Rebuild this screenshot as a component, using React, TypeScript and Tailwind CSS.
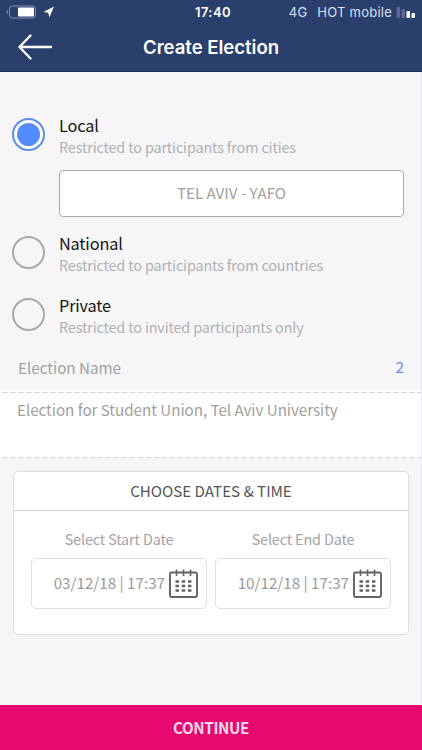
import React from 'react';

type OptionProps = { title: string; hint: string; selected?: boolean };

function Option({ title, hint, selected = false }: OptionProps) {
  return (
    <div className="flex h-11 items-start pl-3">
      <span
        className={
          selected
            ? 'mt-[4px] flex size-[33px] shrink-0 items-center justify-center rounded-full border-2 border-[#5b8def] bg-white'
            : 'mt-[4px] size-[33px] shrink-0 rounded-full border-2 border-[#a9a9a9]'
        }
      >
        {selected && <span className="size-[23px] rounded-full bg-[#548bff]" />}
      </span>
      <div className="ml-[14px] whitespace-nowrap">
        <div className="text-[16.3px] leading-[22px] tracking-[-0.16px] text-[#151515]">{title}</div>
        <div className="text-[14.4px] leading-[22px] tracking-[-0.15px] text-[#b0b0b1]">{hint}</div>
      </div>
    </div>
  );
}

function DashedLine() {
  return (
    <svg className="block h-px w-full" viewBox="0 0 422 1" preserveAspectRatio="none">
      <path d="M2 .5H422" stroke="#d2d2d2" strokeDasharray="5.7 2.3" />
    </svg>
  );
}

function CalendarIcon() {
  return (
    <svg className="h-[29px] w-[29px] shrink-0" viewBox="0 0 29 29" fill="none" stroke="#636366">
      <rect x="1" y="3.5" width="27" height="24.5" rx="1.5" strokeWidth="1.9" />
      <path d="M7.5 0.5V7M14.5 0.5V7M21.5 0.5V7" strokeWidth="1.6" />
      <path
        d="M6.5 12.5H10M12.7 12.5H16.2M18.9 12.5H22.4M6.5 17H10M12.7 17H16.2M18.9 17H22.4M6.5 21.5H10M12.7 21.5H16.2M18.9 21.5H22.4"
        strokeWidth="2.5"
      />
    </svg>
  );
}

function DateField({ label, value }: { label: string; value: string }) {
  return (
    <div className="w-[176px]">
      <div className="text-center text-[14.4px] leading-[22px] tracking-[-0.14px] text-[#a3a3a4]">{label}</div>
      <div className="mt-2 flex h-[51px] items-center justify-end rounded-[5px] border border-[#dededf] pr-[8px]">
        <span className="mr-[4px] whitespace-nowrap pb-[3px] text-[15.2px] leading-[22px] text-[#9b9b9b]">{value}</span>
        <CalendarIcon />
      </div>
    </div>
  );
}

export default function App() {
  return (
    <div className="flex h-[750px] w-[422px] flex-col overflow-hidden bg-[#f6f6f9] font-['Noto_Sans_CJK_SC',sans-serif]">
      <header className="h-[72px] shrink-0 border-b border-[#1f3162] bg-[#2a3f6c] font-['Inter',sans-serif] text-white">
        <div className="grid h-6 grid-cols-3 items-center text-[13px] leading-6">
          <div className="flex items-center pl-[6px]">
            <svg width="50" height="16" viewBox="0 0 50 16">
              <path d="M2 6C0 6.7 0 9.3 2 10Z" fill="#8090b1" />
              <rect x="3.5" y="2" width="26" height="12" rx="3" fill="none" stroke="#8191b3" />
              <rect x="12" y="3.5" width="16" height="9" rx="1" fill="#fff" />
              <path d="M48 2.5L37.5 8L42.3 8.8L43.3 13.5Z" fill="#fff" />
            </svg>
          </div>
          <div className="pl-[4px] text-center font-semibold tracking-[0.4px]">17:40</div>
          <div className="flex items-center justify-end whitespace-nowrap pr-[6px] text-[#d9e1f3]">
            <span className="tracking-[0.2px]">4G</span>
            <span className="ml-[10px] tracking-[0.24px]">HOT mobile</span>
            <svg className="ml-[4px] mt-px" width="20" height="12" viewBox="0 0 20 12">
              <rect x="0.5" y="0" width="3.5" height="11" rx="1" fill="#596b91" />
              <rect x="5.5" y="2" width="3.5" height="9" rx="1" fill="#596b91" />
              <rect x="10.5" y="4" width="3.5" height="7" rx="1" fill="#fff" />
              <rect x="15.5" y="6" width="3.5" height="5" rx="1" fill="#fff" />
            </svg>
          </div>
        </div>
        <div className="grid h-[45px] grid-cols-[80px_1fr_80px] items-center">
          <svg className="ml-[18px]" width="35" height="26" viewBox="0 0 35 26" fill="none" stroke="#fff" strokeWidth="2.3" strokeLinecap="round" strokeLinejoin="round">
            <path d="M33 13H1.5M12.5 1.5L1.5 13L12.5 24.5" />
          </svg>
          <h1 className="text-center text-[18.5px] font-semibold leading-6">Create Election</h1>
        </div>
      </header>

      <main className="flex-1 border-r border-[#e9e9ef]">
        <section className="pt-[42px]">
          <Option title="Local" hint="Restricted to participants from cities" selected />
          <div className="ml-[59px] mr-[17px] mt-3 flex h-[47px] items-center justify-center rounded-[4px] border border-[#a9a9ab] bg-white pb-[4px] text-[15.2px] leading-[22px] text-[#a0a0a0]">
            TEL AVIV - YAFO
          </div>
          <div className="mt-[15px] flex flex-col gap-[18px]">
            <Option title="National" hint="Restricted to participants from countries" />
            <Option title="Private" hint="Restricted to invited participants only" />
          </div>
        </section>

        <section className="mt-[18px]">
          <div className="flex h-[34px] justify-between pl-[18px] pr-[17px] text-[15.2px] leading-[22px] text-[#a0a0a0]">
            <span>Election Name</span>
            <span className="-mt-px text-[#6292e8]">2</span>
          </div>
          <div className="bg-white pt-[2px]">
            <DashedLine />
            <div className="h-[64px] pl-[17px] pt-[5px] text-[15.2px] leading-[22px] tracking-[-0.04px] text-[#a0a0a0]">
              Election for Student Union, Tel Aviv University
            </div>
            <DashedLine />
          </div>
        </section>

        <section className="ml-[13px] mr-[12px] mt-[13px] h-[164px] rounded-[5px] border border-[#dedee1] bg-white">
          <h2 className="h-[39px] border-b border-[#cececf] text-center text-[15.2px] leading-[36px] tracking-[-0.04px] text-[#555557]">
            CHOOSE DATES &amp; TIME
          </h2>
          <div className="flex justify-between px-[17px] pt-[17px]">
            <DateField label="Select Start Date" value="03/12/18 | 17:37" />
            <DateField label="Select End Date" value="10/12/18 | 17:37" />
          </div>
        </section>
      </main>

      <button className="h-[45px] shrink-0 bg-[#e6096e] pb-[2px] text-center text-[15.2px] font-bold leading-[42px] tracking-[-0.4px] text-[#ffd9ee]">
        CONTINUE
      </button>
    </div>
  );
}
